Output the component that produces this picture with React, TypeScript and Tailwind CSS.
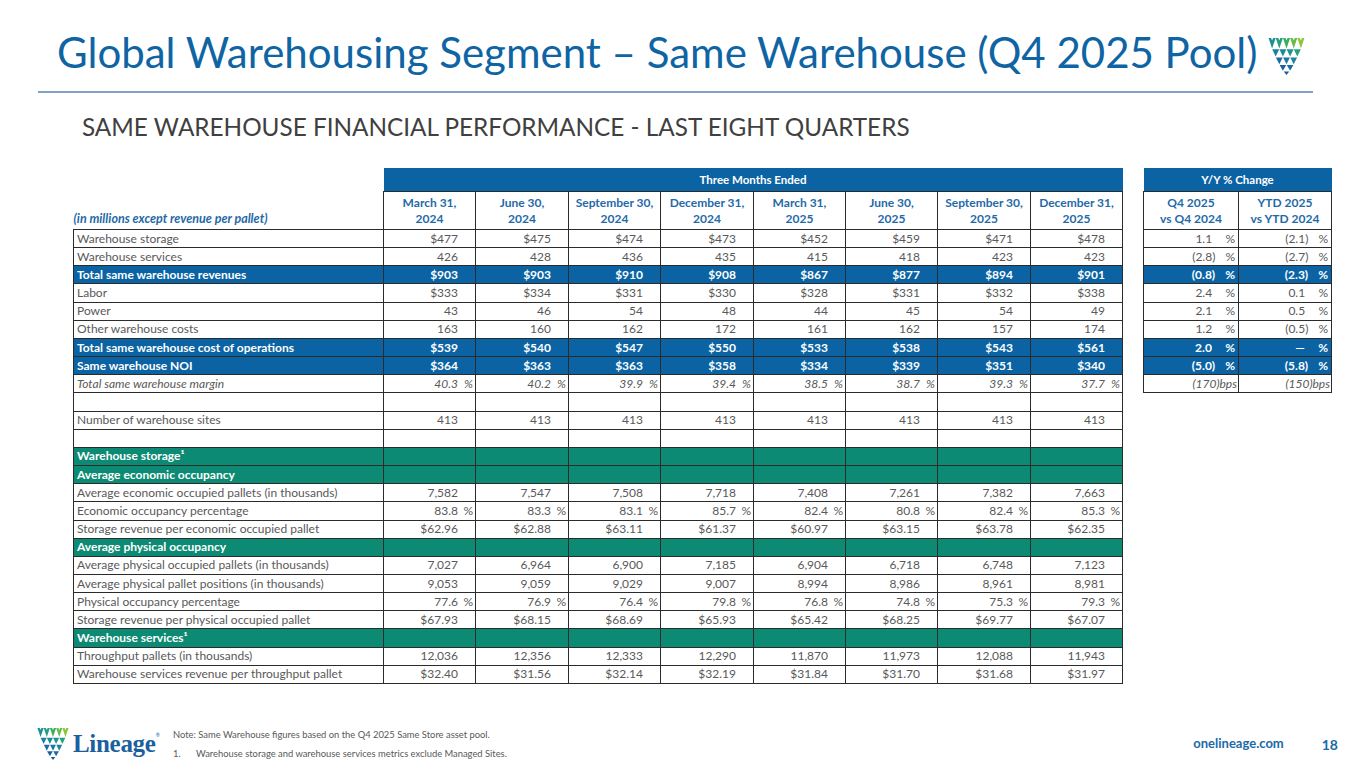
import React from "react";

type Kind = "normal" | "blue" | "teal" | "italic" | "blank";
type Row = {
  label?: React.ReactNode;
  kind: Kind;
  vals?: string[];
  pct?: boolean;
  yy?: [string, string];
};

const rows: Row[] = [
  { label: "Warehouse storage", kind: "normal", vals: ["$477", "$475", "$474", "$473", "$452", "$459", "$471", "$478"], yy: ["1.1", "(2.1)"] },
  { label: "Warehouse services", kind: "normal", vals: ["426", "428", "436", "435", "415", "418", "423", "423"], yy: ["(2.8)", "(2.7)"] },
  { label: "Total same warehouse revenues", kind: "blue", vals: ["$903", "$903", "$910", "$908", "$867", "$877", "$894", "$901"], yy: ["(0.8)", "(2.3)"] },
  { label: "Labor", kind: "normal", vals: ["$333", "$334", "$331", "$330", "$328", "$331", "$332", "$338"], yy: ["2.4", "0.1"] },
  { label: "Power", kind: "normal", vals: ["43", "46", "54", "48", "44", "45", "54", "49"], yy: ["2.1", "0.5"] },
  { label: "Other warehouse costs", kind: "normal", vals: ["163", "160", "162", "172", "161", "162", "157", "174"], yy: ["1.2", "(0.5)"] },
  { label: "Total same warehouse cost of operations", kind: "blue", vals: ["$539", "$540", "$547", "$550", "$533", "$538", "$543", "$561"], yy: ["2.0", "—"] },
  { label: "Same warehouse NOI", kind: "blue", vals: ["$364", "$363", "$363", "$358", "$334", "$339", "$351", "$340"], yy: ["(5.0)", "(5.8)"] },
  { label: "Total same warehouse margin", kind: "italic", pct: true, vals: ["40.3", "40.2", "39.9", "39.4", "38.5", "38.7", "39.3", "37.7"], yy: ["(170)", "(150)"] },
  { kind: "blank" },
  { label: "Number of warehouse sites", kind: "normal", vals: ["413", "413", "413", "413", "413", "413", "413", "413"] },
  { kind: "blank" },
  { label: "Warehouse storage¹", kind: "teal" },
  { label: "Average economic occupancy", kind: "teal" },
  { label: "Average economic occupied pallets (in thousands)", kind: "normal", vals: ["7,582", "7,547", "7,508", "7,718", "7,408", "7,261", "7,382", "7,663"] },
  { label: "Economic occupancy percentage", kind: "normal", pct: true, vals: ["83.8", "83.3", "83.1", "85.7", "82.4", "80.8", "82.4", "85.3"] },
  { label: "Storage revenue per economic occupied pallet", kind: "normal", vals: ["$62.96", "$62.88", "$63.11", "$61.37", "$60.97", "$63.15", "$63.78", "$62.35"] },
  { label: "Average physical occupancy", kind: "teal" },
  { label: "Average physical occupied pallets (in thousands)", kind: "normal", vals: ["7,027", "6,964", "6,900", "7,185", "6,904", "6,718", "6,748", "7,123"] },
  { label: "Average physical pallet positions (in thousands)", kind: "normal", vals: ["9,053", "9,059", "9,029", "9,007", "8,994", "8,986", "8,961", "8,981"] },
  { label: "Physical occupancy percentage", kind: "normal", pct: true, vals: ["77.6", "76.9", "76.4", "79.8", "76.8", "74.8", "75.3", "79.3"] },
  { label: "Storage revenue per physical occupied pallet", kind: "normal", vals: ["$67.93", "$68.15", "$68.69", "$65.93", "$65.42", "$68.25", "$69.77", "$67.07"] },
  { label: "Warehouse services¹", kind: "teal" },
  { label: "Throughput pallets (in thousands)", kind: "normal", vals: ["12,036", "12,356", "12,333", "12,290", "11,870", "11,973", "12,088", "11,943"] },
  { label: "Warehouse services revenue per throughput pallet", kind: "normal", vals: ["$32.40", "$31.56", "$32.14", "$32.19", "$31.84", "$31.70", "$31.68", "$31.97"] },
];

const headers: [string, string][] = [
  ["March 31,", "2024"],
  ["June 30,", "2024"],
  ["September 30,", "2024"],
  ["December 31,", "2024"],
  ["March 31,", "2025"],
  ["June 30,", "2025"],
  ["September 30,", "2025"],
  ["December 31,", "2025"],
];

const colW = [92, 93, 92, 93, 92, 92, 93, 92];

function rowClass(kind: Kind) {
  if (kind === "blue") return "bg-[#0b63a3] text-white font-bold";
  if (kind === "teal") return "bg-[#0c8a73] text-white font-bold";
  if (kind === "italic") return "text-[#595959] italic";
  return "text-[#595959]";
}

function LogoIcon({ size = 36 }: { size?: number }) {
  const tri = (cx: number, y0: number, y1: number, w: number, fill: string, key: string) => (
    <polygon key={key} points={`${cx - w / 2},${y0} ${cx + w / 2},${y0} ${cx},${y1}`} fill={fill} />
  );
  const r0 = ["#1b8f94", "#20a07c", "#3aad5c", "#67bb48", "#8cc63f"];
  const r1 = ["#1a7fa6", "#1a8a98", "#1c9588", "#26a07a"];
  const r2 = ["#1b6ba8", "#1b77a6", "#1a8598"];
  const r3 = ["#1d60a0", "#1c6aa5"];
  return (
    <svg width={size} height={size} viewBox="0 0 36 37" className="shrink-0">
      {r0.map((c, i) => tri(3.6 + i * 7.2, 0, 10.5, 7.1, c, "a" + i))}
      {r1.map((c, i) => tri(7.2 + i * 7.2, 11.3, 18.6, 7.0, c, "b" + i))}
      {r2.map((c, i) => tri(10.8 + i * 7.2, 19.4, 26.2, 6.8, c, "c" + i))}
      {r3.map((c, i) => tri(14.4 + i * 7.2, 27, 32.8, 6.6, c, "d" + i))}
      {tri(18, 33.5, 37, 5.4, "#1d5a98", "e")}
      {[0, 1, 2, 3, 4].map((i) => tri(3.6 + i * 7.2, -0.2, 2.4, 2.2, "#ffffff", "n" + i))}
    </svg>
  );
}

function NumCell({ v, pct, kind }: { v?: string; pct?: boolean; kind: Kind }) {
  return (
    <td className={`border border-[#2b2b2b] p-0 h-[18.17px] ${rowClass(kind)}`}>
      {v !== undefined && (
        <div className="flex justify-end items-center text-[12px] leading-[16px] whitespace-nowrap">
          <span>{v}</span>
          <span className="w-[17px] pr-[2px] text-right">{pct ? "%" : ""}</span>
        </div>
      )}
    </td>
  );
}

function YYCell({ v, kind, bps }: { v?: string; kind: Kind; bps?: boolean }) {
  const hasParen = v?.startsWith("(");
  return (
    <td className={`border border-[#2b2b2b] p-0 h-[18.17px] ${rowClass(kind)}`}>
      {v !== undefined &&
        (bps ? (
          <div className="flex justify-end items-center text-[12px] leading-[16px] pr-[1px] whitespace-nowrap">
            <span>{v}bps</span>
          </div>
        ) : (
          <div className="flex justify-end items-center text-[12px] leading-[16px] pr-[3px] whitespace-nowrap">
            <span>{v}</span>
            {!hasParen && <span className="invisible">)</span>}
            <span className="ml-[10px]">%</span>
          </div>
        ))}
    </td>
  );
}

export default function App() {
  return (
    <div className="w-[1365px] h-[768px] bg-white relative overflow-hidden flex flex-col font-['Lato',sans-serif]">
      {/* Title */}
      <div className="flex items-start pl-[57px] pr-[60px] pt-[27px]">
        <h1 className="text-[42px] leading-[50px] text-[#0f64a3] whitespace-nowrap">
          Global Warehousing Segment – Same Warehouse (Q4 2025 Pool)
        </h1>
        <div className="ml-auto mt-[11px]">
          <LogoIcon size={37} />
        </div>
      </div>
      <div className="ml-[38px] mr-[52px] mt-[14px] h-[1.5px] bg-[#7fa3c0]" />
      <div className="pl-[82px] mt-[18px] text-[24.3px] leading-[32px] text-[#404040] whitespace-nowrap">
        SAME WAREHOUSE FINANCIAL PERFORMANCE - LAST EIGHT QUARTERS
      </div>

      {/* Tables */}
      <div className="flex items-start pl-[73px] mt-[25px]">
        <table className="table-fixed border-collapse">
          <colgroup>
            <col style={{ width: 310 }} />
            {colW.map((w, i) => (
              <col key={i} style={{ width: w }} />
            ))}
          </colgroup>
          <tbody>
            <tr>
              <td className="p-0 h-[24px]" />
              <td colSpan={8} className="p-0 h-[24px] bg-[#0b63a3] text-white font-bold text-[11.5px] text-center">
                Three Months Ended
              </td>
            </tr>
            <tr>
              <td className="p-0 h-[38px] align-bottom text-[12.5px] leading-[16px] italic font-bold text-[#1f6aa8] whitespace-nowrap pb-[2px]">
                (in millions except revenue per pallet)
              </td>
              {headers.map((h, i) => (
                <td key={i} className="border border-[#2b2b2b] p-0 h-[38px] text-center text-[12px] leading-[16px] font-bold text-[#1f6aa8] whitespace-nowrap">
                  {h[0]}
                  <br />
                  {h[1]}
                </td>
              ))}
            </tr>
            {rows.map((r, ri) => (
              <tr key={ri}>
                <td className={`border border-[#2b2b2b] p-0 pl-[3px] h-[18.17px] text-[12px] leading-[16px] whitespace-nowrap ${rowClass(r.kind)}`}>
                  {r.label}
                </td>
                {colW.map((_, ci) => (
                  <NumCell key={ci} v={r.vals ? r.vals[ci] : undefined} pct={r.pct} kind={r.kind} />
                ))}
              </tr>
            ))}
          </tbody>
        </table>

        <table className="table-fixed border-collapse ml-[20px]">
          <colgroup>
            <col style={{ width: 95 }} />
            <col style={{ width: 93 }} />
          </colgroup>
          <tbody>
            <tr>
              <td colSpan={2} className="p-0 h-[24px] bg-[#0b63a3] text-white font-bold text-[11.5px] text-center">
                Y/Y % Change
              </td>
            </tr>
            <tr>
              <td className="border border-[#2b2b2b] p-0 h-[38px] text-center text-[12px] leading-[16px] font-bold text-[#1f6aa8] whitespace-nowrap">
                Q4 2025
                <br />
                vs Q4 2024
              </td>
              <td className="border border-[#2b2b2b] p-0 h-[38px] text-center text-[12px] leading-[16px] font-bold text-[#1f6aa8] whitespace-nowrap">
                YTD 2025
                <br />
                vs YTD 2024
              </td>
            </tr>
            {rows.slice(0, 9).map((r, ri) => (
              <tr key={ri}>
                <YYCell v={r.yy?.[0]} kind={r.kind} bps={r.kind === "italic"} />
                <YYCell v={r.yy?.[1]} kind={r.kind} bps={r.kind === "italic"} />
              </tr>
            ))}
          </tbody>
        </table>
      </div>

      {/* Footer */}
      <div className="mt-auto mb-[5px] flex items-center pl-[37px] pr-[27px]">
        <div className="w-[136px] flex items-center shrink-0">
          <LogoIcon size={32} />
          <span className="ml-[4px] text-[25px] leading-[30px] font-bold text-[#1b5f9c] font-['Liberation_Serif',serif] tracking-[-0.3px]">
            Lineage
          </span>
          <span className="self-start mt-[4px] text-[5px] text-[#1b5f9c]">®</span>
        </div>
        <div className="text-[9.4px] leading-[19px] text-[#595959] whitespace-nowrap">
          <div>Note: Same Warehouse figures based on the Q4 2025 Same Store asset pool.</div>
          <div className="flex">
            <span className="w-[23px]">1.</span>
            <span>Warehouse storage and warehouse services metrics exclude Managed Sites.</span>
          </div>
        </div>
        <div className="ml-auto flex items-center text-[13px] font-bold text-[#1a6aa8]">
          <span>onelineage.com</span>
          <span className="ml-[38px] text-[14px]">18</span>
        </div>
      </div>
    </div>
  );
}
